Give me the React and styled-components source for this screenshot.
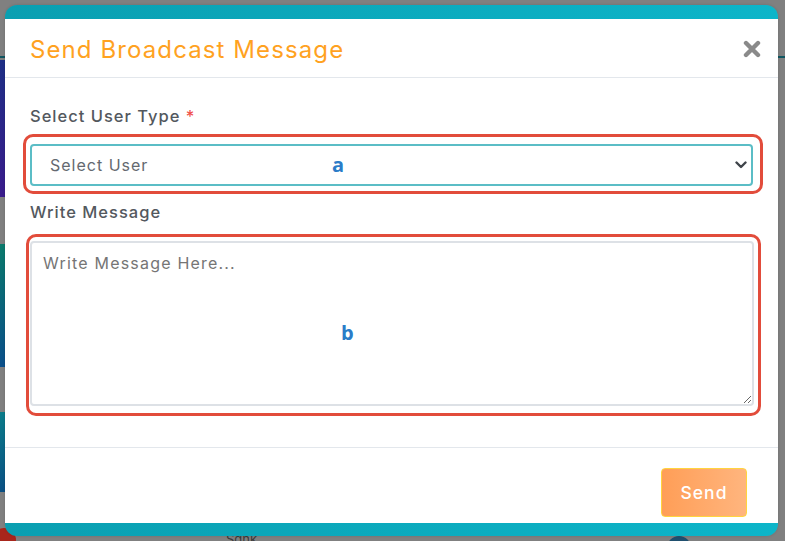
import React from "react";
import styled, { createGlobalStyle } from "styled-components";

const GlobalStyle = createGlobalStyle`
    html, body {
        margin: 0;
        padding: 0;
        background: #808080;
        overflow: hidden;
        font-family: Inter, "Open Sans", Arial, sans-serif;
    }
    * {
        box-sizing: border-box;
    }
`;

const tiles = [
    { top: 58, height: 137, left: "linear-gradient(180deg, #1e2f86, #3a1c8c)", right: "linear-gradient(180deg, #8c3c22, #7a0808)" },
    { top: 47, height: 123, left: "linear-gradient(180deg, #0b7a6c, #0b4f8a)", right: "linear-gradient(180deg, #2d8a58, #0a5c10)" },
    { top: 45, height: 80, left: "linear-gradient(180deg, #0b7c8a, #0b5084)", right: "linear-gradient(180deg, #0b7c8a, #0b5084)" },
];

const Modal = ({ children }) => <ModalFrame>{children}</ModalFrame>;

const CloseIcon = () => (
    <svg width="18" height="18" viewBox="0 0 18 18">
        <path d="M3 3 L15 15 M15 3 L3 15" stroke="#8a8a8a" strokeWidth="4.4" strokeLinecap="round" fill="none" />
    </svg>
);

const Chevron = () => (
    <svg width="12" height="8" viewBox="0 0 12 8">
        <path d="M1.5 1.5 L6 6 L10.5 1.5" stroke="#3f444a" strokeWidth="2.4" strokeLinecap="round" strokeLinejoin="round" fill="none" />
    </svg>
);

const App = () => {
    return (
        <>
            <GlobalStyle />
            <Backdrop>
                <TopLine />
                {tiles.map((t, i) => (
                    <TileRow key={i} style={{ marginTop: t.top, height: t.height }}>
                        <Tile style={{ background: t.left }} />
                        <Tile style={{ background: t.right }} />
                    </TileRow>
                ))}
                <BottomRow>
                    <Dot color='#a8261c' />
                    <BackText>Sdnk</BackText>
                    <Dot color='#1f4f6e' />
                </BottomRow>
            </Backdrop>
            <Modal>
                <Panel>
                    <Header>
                        <Title>Send Broadcast Message</Title>
                        <CloseButton aria-label='close'>
                            <CloseIcon />
                        </CloseButton>
                    </Header>
                    <Body>
                        <Label>
                            Select User Type <Required>*</Required>
                        </Label>
                        <Annotation variant='select'>
                            <SelectBox>
                                <span>Select User</span>
                                <Chevron />
                            </SelectBox>
                            <Mark style={{ left: 306, top: 18 }}>a</Mark>
                        </Annotation>
                        <Label className='second'>Write Message</Label>
                        <Annotation variant='textarea'>
                            <TextArea placeholder='Write Message Here...' />
                            <Mark style={{ left: 312, top: 86 }}>b</Mark>
                        </Annotation>
                    </Body>
                    <Footer>
                        <SendButton>Send</SendButton>
                    </Footer>
                </Panel>
            </Modal>
        </>
    );
};

const Backdrop = styled.div`
    width: 785px;
    height: 541px;
    overflow: hidden;
    background: #808080;
`;

const TopLine = styled.div`
    position: relative;
    top: 56px;
    height: 2px;
    background: #0f5560;
`;

const TileRow = styled.div`
    display: grid;
    grid-template-columns: 200px 1fr 120px;
    width: 898px;
    margin-left: -150px;
    column-gap: 24px;
    & > div:last-child {
        grid-column: 3;
    }
`;

const Tile = styled.div`
    border-radius: 4px;
`;

const BottomRow = styled.div`
    display: flex;
    align-items: flex-start;
    margin-top: 30px;
    margin-left: -8px;
`;

const BackText = styled.span`
    margin-left: 210px;
    margin-top: 11px;
    color: #3a3a3a;
    font-size: 13px;
    line-height: 13px;
`;

const Dot = styled.div`
    width: 24px;
    height: 24px;
    border-radius: 50%;
    background: ${(p) => p.color};
    margin-top: 6px;
    &:last-child {
        margin-left: 410px;
        margin-top: 14px;
    }
`;

const ModalFrame = styled.div`
    position: fixed;
    left: 5px;
    top: 5px;
    width: 773px;
    height: 531px;
    border-radius: 12px;
    padding: 14px 0 13px;
    background: linear-gradient(90deg, #0a9fb1, #0db5c9);
    box-shadow: 0 0 3px rgba(0, 0, 0, 0.15);
`;

const Panel = styled.div`
    background: #fff;
    height: 100%;
    display: flex;
    flex-direction: column;
`;

const Header = styled.div`
    height: 59px;
    display: flex;
    align-items: center;
    justify-content: space-between;
    padding: 2px 17px 0 25px;
    border-bottom: 1px solid #e3e7ec;
`;

const Title = styled.h2`
    margin: 0;
    font-size: 24px;
    font-weight: 400;
    color: #ffa21f;
    letter-spacing: 1.1px;
`;

const CloseButton = styled.button`
    border: none;
    background: none;
    padding: 0;
    display: flex;
    cursor: pointer;
`;

const Body = styled.div`
    padding: 26px 25px 31px;
    display: flex;
    flex-direction: column;
    border-bottom: 1px solid #e3e7ec;
    .second {
        margin-top: 6px;
    }
`;

const Label = styled.div`
    font-size: 16.5px;
    line-height: 24px;
    font-weight: 500;
    letter-spacing: 1px;
    color: #53585e;
`;

const Required = styled.span`
    color: #f0504a;
`;

const Annotation = styled.div`
    position: relative;
    border: 3px solid #e24c3b;
    border-radius: 10px;
    ${(p) =>
        p.variant === "select"
            ? `
        margin: 6px -10px 0 -7px;
        padding: 7px 7px 5px 4px;
    `
            : `
        margin: 10px -8px 0 -4px;
        padding: 4px 4px 7px 1px;
    `}
`;

const Mark = styled.span`
    position: absolute;
    font-family: "Open Sans", Arial, sans-serif;
    font-weight: 700;
    font-size: 20px;
    line-height: 1;
    color: #2b7cc8;
`;

const SelectBox = styled.div`
    height: 42px;
    border: 2px solid #5bbdc6;
    border-radius: 4px;
    display: flex;
    align-items: center;
    justify-content: space-between;
    padding: 0 4px 0 18px;
    font-size: 16px;
    letter-spacing: 1px;
    color: #646970;
`;

const TextArea = styled.textarea`
    display: block;
    width: 100%;
    height: 165px;
    border: 2px solid #dde1e6;
    border-radius: 4px;
    padding: 10px 11px;
    font-family: Inter, "Open Sans", Arial, sans-serif;
    font-size: 16px;
    letter-spacing: 1.2px;
    color: #333;
    outline: none;
    resize: vertical;
    ::placeholder {
        color: #8b9096;
    }
`;

const Footer = styled.div`
    flex: 1;
    display: flex;
    justify-content: flex-end;
    align-items: flex-start;
    padding: 20px 31px 0;
`;

const SendButton = styled.button`
    width: 86px;
    height: 49px;
    border: 1px solid #ffd43f;
    border-radius: 4px;
    background: linear-gradient(90deg, #ff9e57, #ffb57e);
    color: #fff;
    font-family: Inter, "Open Sans", Arial, sans-serif;
    font-size: 17.5px;
    font-weight: 500;
    letter-spacing: 1px;
    cursor: pointer;
`;

export default App;
